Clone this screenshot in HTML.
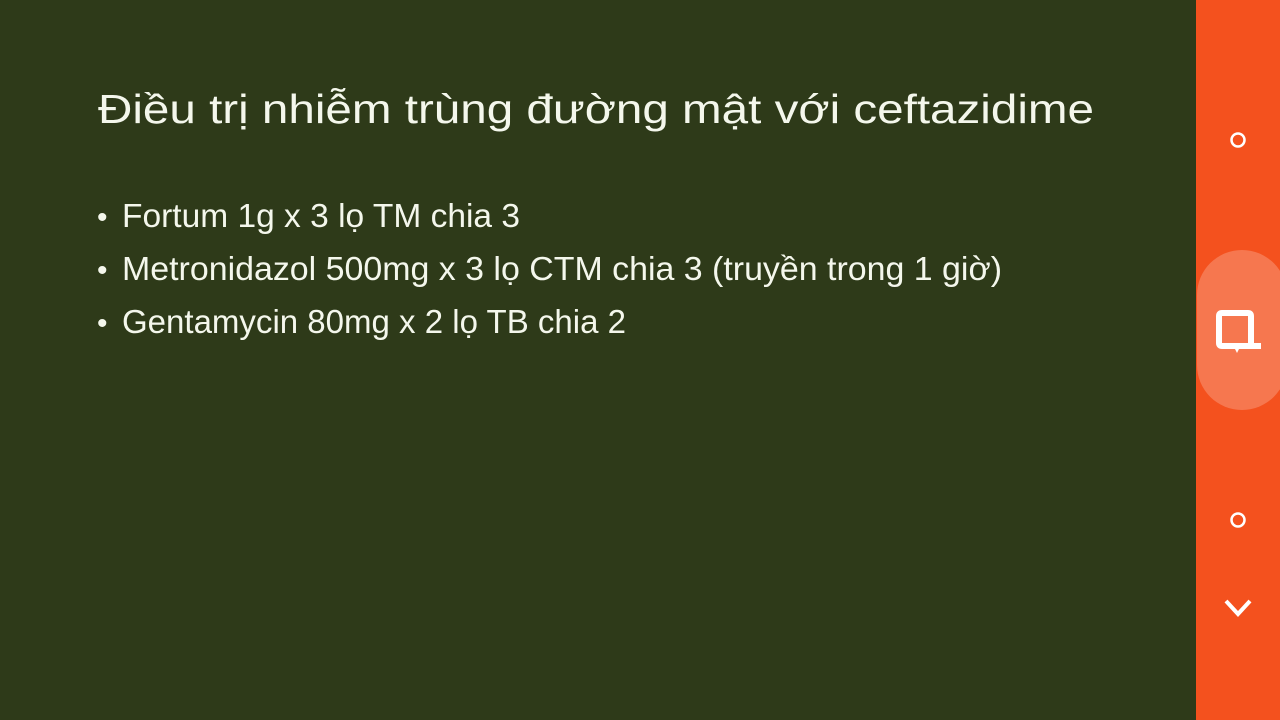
<!DOCTYPE html>
<html><head><meta charset="utf-8"><style>
html,body{margin:0;padding:0;width:1280px;height:720px;overflow:hidden;background:#2e3a19;}
svg{position:absolute;left:0;top:0}
</style></head><body>
<svg width="1280" height="720" xmlns="http://www.w3.org/2000/svg">
<rect x="0" y="0" width="1196" height="720" fill="#2e3a19"/>
<rect x="1196" y="0" width="84" height="720" fill="#f4511e"/>
<rect x="1197" y="250" width="90" height="160" rx="45" fill="#f6774f"/>
<circle cx="1238" cy="140" r="6.5" fill="none" stroke="#fff" stroke-width="2.5"/>
<circle cx="1238" cy="520" r="6.5" fill="none" stroke="#fff" stroke-width="2.5"/>
<path d="M1226 601 L1238 614 L1250 601" fill="none" stroke="#fff" stroke-width="4"/>
<path d="M1251 346 V316 Q1251 313 1248 313 H1222 Q1219 313 1219 316 V343 Q1219 346 1222 346 H1261" fill="none" stroke="#fff" stroke-width="6" stroke-linejoin="round"/>
<path d="M1234 347 l3 6 l3 -6 z" fill="#fff"/>
<g font-family="Liberation Sans, sans-serif" fill="#f4f7ec">
<text x="98" y="123" font-size="41" textLength="996" lengthAdjust="spacingAndGlyphs">Điều trị nhiễm trùng đường mật với ceftazidime</text>
<text x="97" y="227" font-size="30">•</text>
<text x="122" y="227" font-size="33" textLength="398" lengthAdjust="spacingAndGlyphs">Fortum 1g x 3 lọ TM chia 3</text>
<text x="97" y="280" font-size="30">•</text>
<text x="122" y="280" font-size="33" textLength="880" lengthAdjust="spacingAndGlyphs">Metronidazol 500mg x 3 lọ CTM chia 3 (truyền trong 1 giờ)</text>
<text x="97" y="333" font-size="30">•</text>
<text x="122" y="333" font-size="33" textLength="504" lengthAdjust="spacingAndGlyphs">Gentamycin 80mg x 2 lọ TB chia 2</text>
</g>
</svg>
</body></html>
